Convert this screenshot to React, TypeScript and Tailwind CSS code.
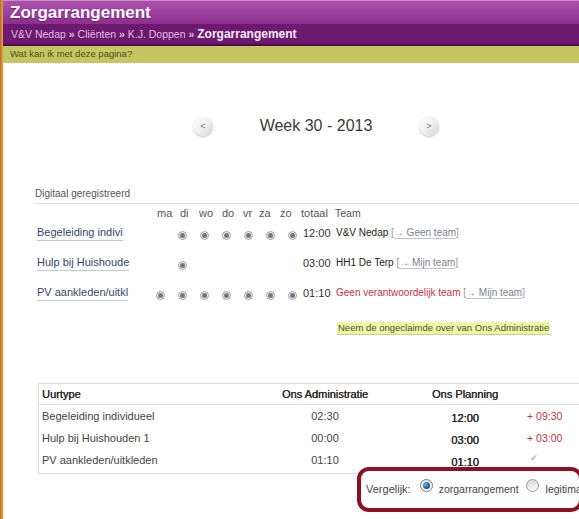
import React from "react";

const Dot = () => (
  <span className="mt-[5px] w-[9px] h-[9px] rounded-full border border-[#a0a0a0] bg-[#f0f0f0] flex items-center justify-center">
    <span className="w-[5px] h-[5px] rounded-full bg-[#777]" />
  </span>
);

const Empty = () => <span />;

const NavBtn = ({ ch }: { ch: string }) => (
  <span className="w-[20px] h-[20px] rounded-full bg-gradient-to-br from-[#ffffff] via-[#f0f0f0] to-[#d4d4d4] shadow-[0_1px_2px_rgba(0,0,0,0.25)] flex items-center justify-center text-[9px] text-[#777] leading-none">
    {ch}
  </span>
);

const TeamLink = ({ label }: { label: string }) => (
  <span className="text-[#999]">
    {" "}[<span className="text-[#7a8290] border-b border-[#c4c4c4]">→ {label}</span>]
  </span>
);

type Row = { name: string; days: boolean[]; total: string; team: React.ReactNode };

const rows: Row[] = [
  {
    name: "Begeleiding indivi",
    days: [false, true, true, true, true, true, true],
    total: "12:00",
    team: (
      <>
        <span className="text-[#222]">V&amp;V Nedap</span>
        <TeamLink label="Geen team" />
      </>
    ),
  },
  {
    name: "Hulp bij Huishoude",
    days: [false, true, false, false, false, false, false],
    total: "03:00",
    team: (
      <>
        <span className="text-[#222]">HH1 De Terp</span>
        <TeamLink label="Mijn team" />
      </>
    ),
  },
  {
    name: "PV aankleden/uitkl",
    days: [true, true, true, true, true, true, true],
    total: "01:10",
    team: (
      <>
        <span className="text-[#c8323f]">Geen verantwoordelijk team</span>
        <TeamLink label="Mijn team" />
      </>
    ),
  },
];

const summary = [
  { name: "Begeleiding individueel", adm: "02:30", plan: "12:00", diff: "+ 09:30" },
  { name: "Hulp bij Huishouden 1", adm: "00:00", plan: "03:00", diff: "+ 03:00" },
  { name: "PV aankleden/uitkleden", adm: "01:10", plan: "01:10", diff: "" },
];

export default function App() {
  return (
    <div className="relative w-[579px] h-[519px] overflow-hidden bg-white flex font-['Liberation_Sans',Arial,sans-serif]">
      <div className="w-[3px] shrink-0 bg-gradient-to-r from-[#b5661c] via-[#d48a34] to-[#e0a456]" />
      <div className="flex-1 min-w-0 flex flex-col">
        <header className="shrink-0">
          <div className="h-[24px] border-t border-[#c98ec8] bg-gradient-to-b from-[#ab50aa] via-[#9d41a0] to-[#8a2f8d] pl-[7px] flex items-center">
            <h1 className="text-white text-[17px] font-bold leading-none [text-shadow:0_1px_1px_rgba(60,0,60,0.5)]">
              Zorgarrangement
            </h1>
          </div>
          <div className="h-[20px] bg-[#6c196f] pl-[8px] flex items-center">
            <span className="text-[10.5px] text-[#e3bfe3] whitespace-pre leading-none">
              {"V&V Nedap "}
              <b>»</b>
              {" Cliënten "}
              <b>»</b>
              {" K.J. Doppen "}
              <b>»</b>
              {" "}
              <b className="text-[12px] text-[#f7e8f7]">Zorgarrangement</b>
            </span>
          </div>
          <div className="h-[2px] bg-[#4e0a50]" />
          <div className="h-[17px] bg-[#c3c661] pl-[7px] flex items-center text-[9.5px] text-[#4d4e26]">
            Wat kan ik met deze pagina?
          </div>
        </header>

        <main className="flex-1 border-l-2 border-[#fbf0e0] flex flex-col">
          {/* week navigation */}
          <div className="mt-[53px] ml-[188px] h-[20px] flex items-center">
            <NavBtn ch="<" />
            <span className="w-[206px] text-center text-[16px] text-[#3a3a3a] leading-none">Week 30 - 2013</span>
            <NavBtn ch=">" />
          </div>

          {/* Digitaal geregistreerd */}
          <div className="mt-[52px] ml-[29px] border-b border-[#dedede] pb-[3px] pl-[1px] text-[10px] leading-[12px] text-[#555]">
            Digitaal geregistreerd
          </div>

          <div className="ml-[32px] mt-[2px] h-[14px] grid grid-cols-[120px_23px_19px_23px_21px_16px_21px_21px_34px_1fr] items-center text-[11px] text-[#555] leading-none">
            <span />
            <span>ma</span>
            <span>di</span>
            <span>wo</span>
            <span>do</span>
            <span>vr</span>
            <span>za</span>
            <span>zo</span>
            <span>totaal</span>
            <span className="text-[10.5px]">Team</span>
          </div>

          <div className="ml-[32px] flex flex-col gap-[4px]">
            {rows.map((r) => (
              <div
                key={r.name}
                className="h-[26px] grid grid-cols-[112px_repeat(7,22px)_33px_1fr] items-center justify-items-start leading-none"
              >
                <span className="text-[11px] text-[#35466a] border-b border-[#c6c8d0] pb-[2px] mt-[2px]">{r.name}</span>
                {r.days.map((d, i) => (
                  <span key={i} className="w-full flex justify-center">
                    {d ? <Dot /> : <Empty />}
                  </span>
                ))}
                <span className="text-[11px] text-[#333]">{r.total}</span>
                <span className="text-[10px] whitespace-nowrap">{r.team}</span>
              </div>
            ))}
          </div>

          <div className="ml-[332px] mt-[16px] flex">
            <span className="h-[13px] flex items-center bg-[#eef7a6] border-b border-[#c9d286] text-[9.5px] leading-none text-[#4b5230] px-[1px] whitespace-nowrap">
              Neem de ongeclaimde over van Ons Administratie
            </span>
          </div>

          {/* summary table */}
          <div className="mt-[48px] ml-[33px] w-[560px] shrink-0 border border-[#dcdcdc] pb-[2px] text-[11px] text-[#444] leading-none">
            <div className="h-[21px] border-b border-[#e0e0e0] grid grid-cols-[242px_88px_46px_100px_12px_1fr] items-center text-[#2a2a2a] [text-shadow:0.35px_0_0_#2a2a2a]">
              <span className="pl-[3px]">Uurtype</span>
              <span className="text-center whitespace-nowrap">Ons Administratie</span>
              <span />
              <span className="text-center">Ons Planning</span>
              <span />
              <span />
            </div>
            {summary.map((s) => (
              <div key={s.name} className="h-[22px] grid grid-cols-[242px_88px_46px_100px_12px_1fr] items-center">
                <span className="pl-[3px]">{s.name}</span>
                <span className="text-center">{s.adm}</span>
                <span />
                <span className="text-center pt-[4px] text-[#222] [text-shadow:0.35px_0_0_#222]">{s.plan}</span>
                <span />
                {s.diff ? (
                  <span className="text-[10.5px] text-[#c8323f]">{s.diff}</span>
                ) : (
                  <span className="pl-[3px] pb-[4px] text-[9px] text-[#b8b8b8]">✔</span>
                )}
              </div>
            ))}
          </div>
        </main>
      </div>

      {/* annotation box */}
      <div className="absolute left-[357px] top-[467px] w-[226px] h-[45px] border-4 border-[#8c1021] rounded-[12px] bg-white overflow-hidden flex items-center pl-[5px] text-[#444] whitespace-nowrap leading-none">
        <span className="text-[11px]">Vergelijk:</span>
        <span className="ml-[9px] -mt-[8px] w-[13px] h-[13px] rounded-full border border-[#6f7a86] bg-gradient-to-b from-[#e9e9e9] to-[#ffffff] flex items-center justify-center shrink-0">
          <span className="w-[7px] h-[7px] rounded-full bg-[radial-gradient(circle_at_35%_35%,#7fb6e6,#1d5a96_60%,#123f6e)]" />
        </span>
        <span className="ml-[6px] text-[10.5px]">zorgarrangement</span>
        <span className="ml-[7px] -mt-[8px] w-[13px] h-[13px] rounded-full border border-[#9a9a9a] bg-gradient-to-b from-[#d8d8d8] to-[#fbfbfb] shrink-0" />
        <span className="ml-[7px] text-[10.5px]">legitimatie</span>
      </div>
    </div>
  );
}
